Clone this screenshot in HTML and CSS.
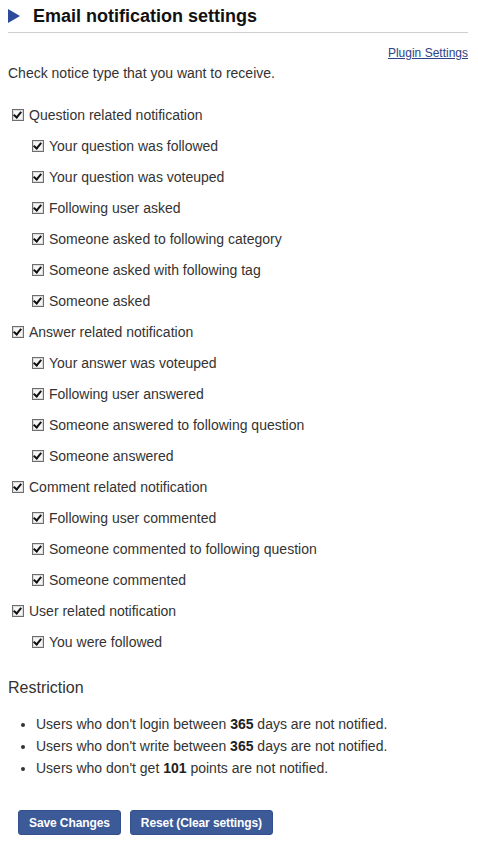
FILE: index.html
```html
<!DOCTYPE html>
<html>
<head>
<meta charset="utf-8">
<link rel="stylesheet" href="styles.css">
</head>
<body>
<div class="wrap">
  <div class="title">
    <svg class="tri" width="12" height="14" viewBox="0 0 12 14"><polygon points="0,0 12,7 0,14" fill="#2d4a9a"/></svg>
    <h2>Email notification settings</h2>
  </div>
  <div class="links"><a href="#">Plugin Settings</a></div>
  <p class="intro">Check notice type that you want to receive.</p>

  <div class="list">
    <div class="row"><span class="cb"></span>Question related notification</div>
    <div class="row sub"><span class="cb"></span>Your question was followed</div>
    <div class="row sub"><span class="cb"></span>Your question was voteuped</div>
    <div class="row sub"><span class="cb"></span>Following user asked</div>
    <div class="row sub"><span class="cb"></span>Someone asked to following category</div>
    <div class="row sub"><span class="cb"></span>Someone asked with following tag</div>
    <div class="row sub"><span class="cb"></span>Someone asked</div>
    <div class="row"><span class="cb"></span>Answer related notification</div>
    <div class="row sub"><span class="cb"></span>Your answer was voteuped</div>
    <div class="row sub"><span class="cb"></span>Following user answered</div>
    <div class="row sub"><span class="cb"></span>Someone answered to following question</div>
    <div class="row sub"><span class="cb"></span>Someone answered</div>
    <div class="row"><span class="cb"></span>Comment related notification</div>
    <div class="row sub"><span class="cb"></span>Following user commented</div>
    <div class="row sub"><span class="cb"></span>Someone commented to following question</div>
    <div class="row sub"><span class="cb"></span>Someone commented</div>
    <div class="row"><span class="cb"></span>User related notification</div>
    <div class="row sub"><span class="cb"></span>You were followed</div>
  </div>

  <h3 class="restr">Restriction</h3>
  <ul class="rules">
    <li>Users who don't login between <b>365</b> days are not notified.</li>
    <li>Users who don't write between <b>365</b> days are not notified.</li>
    <li>Users who don't get <b>101</b> points are not notified.</li>
  </ul>

  <div class="buttons">
    <button class="btn">Save Changes</button>
    <button class="btn">Reset (Clear settings)</button>
  </div>
</div>
</body>
</html>
```

FILE: styles.css
```css
* { box-sizing: border-box; }
html, body { margin: 0; padding: 0; background: #fff; }
body {
  font-family: "Liberation Sans", Arial, sans-serif;
  color: #333;
  font-size: 14px;
}
.wrap { padding: 5px 10px 0 8px; }
.title {
  display: flex;
  align-items: center;
  gap: 13px;
  height: 28px;
  padding-bottom: 6px;
  border-bottom: 1px solid #cfcfcf;
}
.tri { display: block; margin-top: 0; }
.title h2 {
  margin: 0;
  font-size: 18px;
  line-height: 22px;
  font-weight: bold;
  color: #111;
}
.links {
  text-align: right;
  font-size: 12px;
  line-height: 14px;
  margin-top: 13px;
}
.links a { color: #2e4288; }
.intro {
  margin: 5px 0 0;
  line-height: 16px;
}
.list { margin-top: 18px; }
.row {
  display: flex;
  align-items: center;
  height: 31px;
  padding-left: 4px;
}
.row.sub { padding-left: 24px; }
.cb {
  position: relative;
  width: 12px;
  height: 12px;
  border: 1px solid #6e6e6e;
  box-shadow: inset 0 0 0 1px #dcdcdc;
  background: #f6f6f6;
  margin-right: 5px;
  flex: none;
}
.cb::after {
  content: "";
  position: absolute;
  left: 2px;
  top: 0px;
  width: 3px;
  height: 6px;
  border: solid #111;
  border-width: 0 2px 2px 0;
  transform: rotate(40deg);
}
.restr {
  margin: 21px 0 0;
  font-size: 16px;
  font-weight: normal;
  line-height: 20px;
  color: #333;
}
.rules {
  margin: 15px 0 0;
  padding-left: 28px;
  line-height: 22px;
}
.rules b { color: #222; }
.buttons {
  display: flex;
  gap: 9px;
  margin-top: 31px;
  padding-left: 10px;
}
.btn {
  font-family: "Liberation Sans", Arial, sans-serif;
  font-weight: bold;
  font-size: 12px;
  color: #fff;
  background: #3d5a98;
  border: 1px solid #34508c;
  border-radius: 3px;
  height: 25px;
  padding: 0 10px;
  letter-spacing: -0.1px;
}
```
